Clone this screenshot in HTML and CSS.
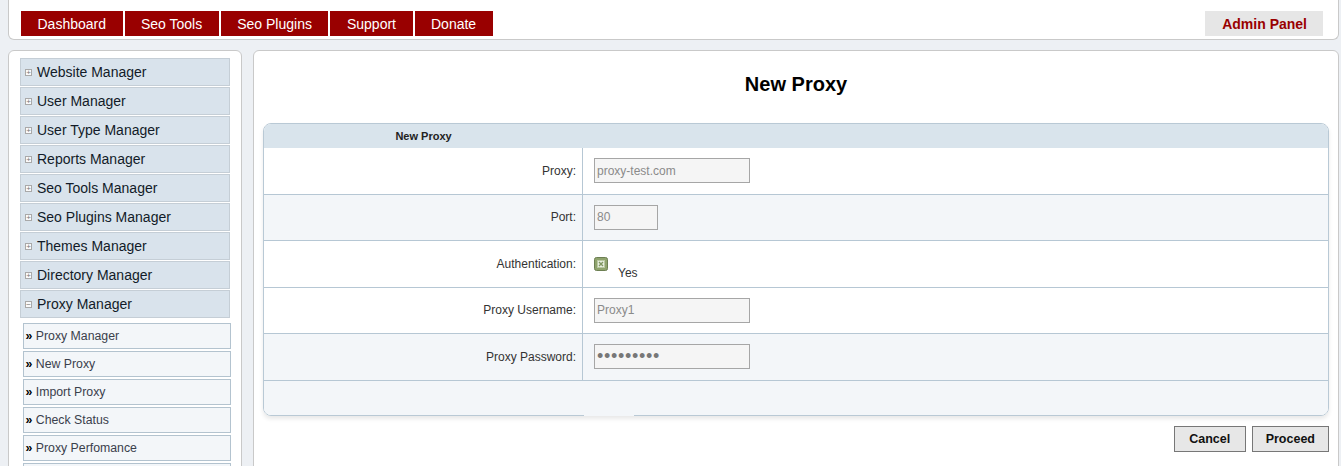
FILE: index.html
```html
<!DOCTYPE html>
<html>
<head>
<meta charset="utf-8">
<title>New Proxy</title>
<link rel="stylesheet" href="styles.css">
</head>
<body>
<div class="page">
  <header class="header">
    <nav class="nav">
      <a class="nav-btn">Dashboard</a>
      <a class="nav-btn">Seo Tools</a>
      <a class="nav-btn">Seo Plugins</a>
      <a class="nav-btn">Support</a>
      <a class="nav-btn">Donate</a>
    </nav>
    <a class="admin-btn">Admin Panel</a>
  </header>

  <div class="layout">
    <aside class="sidebar">
      <div class="menu-item"><span class="tog">+</span>Website Manager</div>
      <div class="menu-item"><span class="tog">+</span>User Manager</div>
      <div class="menu-item"><span class="tog">+</span>User Type Manager</div>
      <div class="menu-item"><span class="tog">+</span>Reports Manager</div>
      <div class="menu-item"><span class="tog">+</span>Seo Tools Manager</div>
      <div class="menu-item"><span class="tog">+</span>Seo Plugins Manager</div>
      <div class="menu-item"><span class="tog">+</span>Themes Manager</div>
      <div class="menu-item"><span class="tog">+</span>Directory Manager</div>
      <div class="menu-item"><span class="tog minus">&minus;</span>Proxy Manager</div>
      <div class="submenu">
        <div class="sub-item"><b>&raquo;</b> Proxy Manager</div>
        <div class="sub-item"><b>&raquo;</b> New Proxy</div>
        <div class="sub-item"><b>&raquo;</b> Import Proxy</div>
        <div class="sub-item"><b>&raquo;</b> Check Status</div>
        <div class="sub-item"><b>&raquo;</b> Proxy Perfomance</div>
        <div class="sub-item"></div>
      </div>
    </aside>

    <main class="main">
      <h1 class="title">New Proxy</h1>
      <div class="form-table">
        <div class="form-head">
          <div class="head-cell">New Proxy</div>
          <div></div>
        </div>
        <div class="form-row">
          <div class="label-cell">Proxy:</div>
          <div class="value-cell"><input class="field wide" type="text" value="proxy-test.com"></div>
        </div>
        <div class="form-row alt">
          <div class="label-cell">Port:</div>
          <div class="value-cell"><input class="field narrow" type="text" value="80"></div>
        </div>
        <div class="form-row">
          <div class="label-cell">Authentication:</div>
          <div class="value-cell auth">
            <svg class="check" width="14" height="14" viewBox="0 0 14 14">
              <rect x="0.5" y="0.5" width="13" height="13" rx="2" fill="#8fa36d" stroke="#6c7f52"/>
              <rect x="3.5" y="3.5" width="7" height="7" fill="#e9efe0" stroke="#b9c8a2"/>
              <path d="M5 5 L9 9 M9 5 L5 9" stroke="#7e9560" stroke-width="1.4"/>
            </svg>
            <span class="yes">Yes</span>
          </div>
        </div>
        <div class="form-row">
          <div class="label-cell">Proxy Username:</div>
          <div class="value-cell"><input class="field wide" type="text" value="Proxy1"></div>
        </div>
        <div class="form-row alt">
          <div class="label-cell">Proxy Password:</div>
          <div class="value-cell"><input class="field wide pass" type="password" value="123456789"></div>
        </div>
        <div class="form-foot">
          <div></div>
          <div class="foot-cell"><div class="foot-patch"></div></div>
        </div>
      </div>
      <div class="actions">
        <button class="btn">Cancel</button>
        <button class="btn">Proceed</button>
      </div>
    </main>
  </div>
</div>
</body>
</html>
```

FILE: styles.css
```css
* { box-sizing: border-box; }

html, body {
  margin: 0;
  padding: 0;
  background: #edf0f4;
  font-family: "Liberation Sans", Arial, sans-serif;
}

.page {
  margin: 0 2px 0 8px;
}

.header {
  background: #fff;
  border: 1px solid #c9c9c9;
  border-top: 0;
  border-radius: 0 0 6px 6px;
  display: flex;
  justify-content: space-between;
  align-items: flex-start;
  padding: 11px 15px 3px 12px;
}

.nav {
  display: flex;
  gap: 2px;
}

.nav-btn {
  display: block;
  height: 25px;
  line-height: 25px;
  padding: 1px 16.5px 0 16.5px;
  background: #990000;
  color: #fff;
  font-size: 14px;
  text-decoration: none;
}

.admin-btn {
  display: block;
  height: 25px;
  line-height: 25px;
  padding: 1px 16px 0 17px;
  background: #e6e6e6;
  color: #990000;
  font-size: 14px;
  font-weight: bold;
}

.layout {
  display: flex;
  gap: 11px;
  margin-top: 10px;
  align-items: stretch;
}

.sidebar {
  width: 234px;
  flex: none;
  background: #fff;
  border: 1px solid #c9c9c9;
  border-radius: 6px;
  padding: 7px 11px 20px 11px;
}

.menu-item {
  height: 28px;
  margin-bottom: 1px;
  background: #d9e3ec;
  border: 1px solid #c5ced6;
  display: flex;
  align-items: center;
  font-size: 14px;
  color: #121b28;
  padding-left: 4px;
}

.tog {
  width: 7px;
  height: 7px;
  border: 1px solid #a9a9a9;
  background: #fafafa;
  color: #777;
  font-size: 8px;
  line-height: 5px;
  text-align: center;
  margin-right: 5px;
  overflow: hidden;
  flex: none;
}

.submenu {
  margin: 5px -1px 0 3px;
}

.sub-item {
  height: 26px;
  margin-bottom: 2px;
  background: #f3f6f9;
  border: 1px solid #b3c3cf;
  display: flex;
  align-items: center;
  font-size: 12.3px;
  color: #3a404c;
  padding-left: 1.5px;
  white-space: pre;
}

.sub-item b {
  color: #000;
}

.main {
  flex: 1;
  background: #fff;
  border: 1px solid #c9c9c9;
  border-radius: 6px;
  padding: 0 9px 20px 9px;
}

.title {
  margin: 22px 0 27px 0;
  font-size: 20px;
  line-height: 23px;
  font-weight: bold;
  text-align: center;
  color: #000;
}

.form-table {
  border: 1px solid #b9c9d5;
  border-radius: 8px;
  box-shadow: 0 3px 4px rgba(0, 0, 0, 0.09);
}

.form-head {
  display: grid;
  grid-template-columns: 319px 1fr;
  height: 24px;
  background: #d9e4ec;
  border-radius: 7px 7px 0 0;
}

.head-cell {
  font-size: 11px;
  font-weight: bold;
  color: #222;
  text-align: center;
  line-height: 24px;
}

.form-row {
  display: grid;
  grid-template-columns: 319px 1fr;
  height: 46.5px;
  border-bottom: 1px solid #b6c7d4;
  background: #fff;
}

.form-row.alt {
  background: #f3f6f9;
}

.label-cell {
  border-right: 1px solid #b6c7d4;
  display: flex;
  align-items: center;
  justify-content: flex-end;
  padding-right: 6px;
  font-size: 12px;
  color: #333;
}

.value-cell {
  display: flex;
  align-items: center;
  padding-left: 11px;
}

.value-cell.auth {
  align-items: flex-start;
  padding-top: 16px;
}

.check {
  display: block;
  flex: none;
}

.yes {
  font-size: 12px;
  color: #333;
  margin: 9px 0 0 10px;
}

.field {
  height: 25px;
  border: 1px solid #a6a6a6;
  background: #f5f5f5;
  color: #8a8a8a;
  font-family: "Liberation Sans", Arial, sans-serif;
  font-size: 12px;
  padding: 0 2px;
  margin: 0;
  outline: none;
}

.field.wide { width: 156px; }
.field.narrow { width: 64px; }

.field.pass {
  font-size: 18px;
  letter-spacing: 0.7px;
  color: #777;
}

.form-foot {
  display: grid;
  grid-template-columns: 320px 1fr;
  height: 34px;
  background: #f3f6f9;
  border-radius: 0 0 7px 7px;
}

.foot-patch {
  width: 50px;
  height: 35px;
  background: #f3f6f9;
}

.actions {
  display: flex;
  justify-content: flex-end;
  gap: 6px;
  margin-top: 10px;
}

.btn {
  height: 26px;
  min-width: 72px;
  padding: 0 13px;
  background: #e7e7e7;
  border: 1px solid #777;
  border-radius: 0;
  font-family: "Liberation Sans", Arial, sans-serif;
  font-size: 12.5px;
  font-weight: bold;
  color: #111;
}
```
